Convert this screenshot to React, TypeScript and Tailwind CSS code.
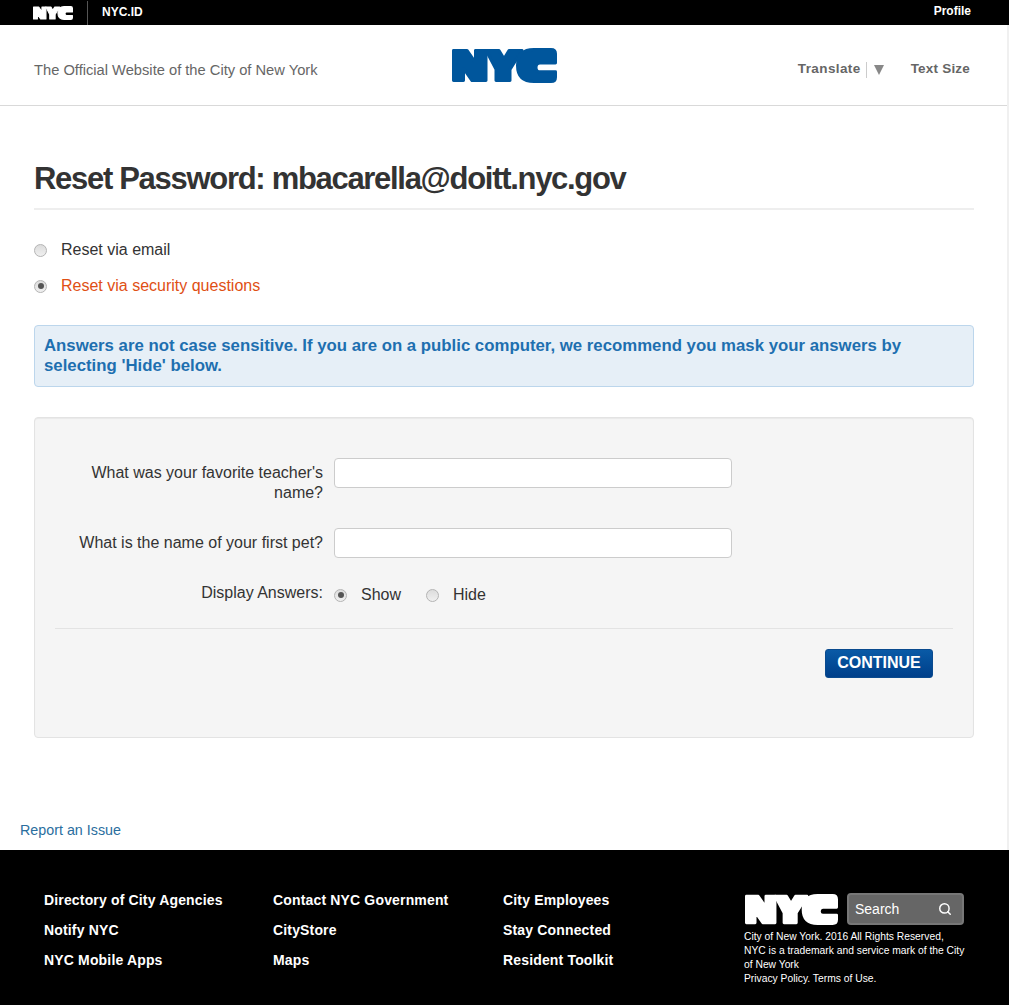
import { Search } from 'lucide-react';

const NycLogo = ({ className }: { className: string }) => (
  <svg className={className} viewBox="0 0 105 36" preserveAspectRatio="none" fill="currentColor" stroke="currentColor" strokeWidth={3} strokeLinejoin="round">
    <path d="M1.500 2.500H15L23.500 15V2.500H34V33.500H20L11.500 21V33.500H1.500Z" />
    <path d="M34 2.500H47L52 11L57 2.500H70L58 22V33.500H44V22Z" />
    <path d="M82 1.500H99Q103.500 1.500 103.500 6V15.500H88Q84 15.500 84 20Q84 24.500 88 24.500H103.500V30Q103.500 34.500 99 34.500H82Q65.500 34.500 65.500 18Q65.500 1.500 82 1.500Z" />
  </svg>
);

const Radio = ({ checked = false }: { checked?: boolean }) => (
  <span className="flex h-[13px] w-[13px] shrink-0 items-center justify-center rounded-full border border-[#b4b4b4] bg-gradient-to-b from-[#dcdcdc] to-[#f0f0f0]">
    {checked && <span className="h-[6px] w-[6px] rounded-full bg-[#555]" />}
  </span>
);

const footerCols = [
  { className: 'w-[229px]', links: ['Directory of City Agencies', 'Notify NYC', 'NYC Mobile Apps'] },
  { className: 'w-[230px]', links: ['Contact NYC Government', 'CityStore', 'Maps'] },
  { className: 'w-[242px]', links: ['City Employees', 'Stay Connected', 'Resident Toolkit'] },
];

export default function App() {
  return (
    <div className="min-h-[1005px] bg-white font-['Liberation_Sans',Arial,sans-serif] text-[#333]">
      {/* top bar */}
      <div className="flex h-[25px] items-center bg-black pl-[33px] pr-[38px] text-white">
        <NycLogo className="h-[14px] w-[40px] text-white" />
        <div className="ml-[14px] h-[24px] w-px bg-[#555]" />
        <span className="ml-[14px] pb-[1px] text-[12px] font-bold">NYC.ID</span>
        <span className="ml-auto pb-[4px] text-[12px] font-bold">Profile</span>
      </div>

      <div className="border-r-2 border-[#f0f0f0]">
        {/* header */}
        <div className="flex h-[81px] items-center border-b border-[#d9d9d9] pl-[34px] pr-[37px]">
          <span className="w-[418px] pt-[10px] text-[14.700px] text-[#666]">The Official Website of the City of New York</span>
          <NycLogo className="h-[35px] w-[105px] text-[#00569c]" />
          <div className="ml-auto flex items-center pt-[9px] text-[13.500px] font-bold text-[#666]">
            <span className="tracking-[0.4px]">Translate</span>
            <span className="ml-[5px] h-[16px] w-px bg-[#ccc]" />
            <span className="ml-[7px] h-0 w-0 border-x-[5px] border-t-[10px] border-x-transparent border-t-[#888]" />
            <span className="ml-[27px] tracking-[0.2px]">Text Size</span>
          </div>
        </div>

        {/* main */}
        <div className="pl-[34px] pr-[33px]">
          <h1 className="mt-[52px] border-b-2 border-[#eee] pb-[8px] text-[31px] font-bold leading-[42px] tracking-[-1.300px]">
            Reset Password: mbacarella@doitt.nyc.gov
          </h1>

          <div className="mt-[27px] flex h-[26px] items-center gap-[14px] text-[16px]">
            <Radio />
            <span>Reset via email</span>
          </div>
          <div className="mt-[10px] flex h-[26px] items-center gap-[14px] text-[16px] text-[#e04f14]">
            <Radio checked />
            <span>Reset via security questions</span>
          </div>

          <div className="mt-[26px] rounded border border-[#bcd6ec] bg-[#e6eff7] px-[9px] py-[10px] text-[16.800px] font-bold leading-[20px] text-[#1e6fb0]">
            Answers are not case sensitive. If you are on a public computer, we recommend you mask your answers by selecting 'Hide' below.
          </div>

          <div className="mt-[30px] h-[321px] rounded border border-[#e3e3e3] bg-[#f5f5f5] px-[20px] pt-[40px] text-[16px] shadow-[inset_0_1px_1px_rgba(0,0,0,0.05)]">
            <div className="flex gap-[11px]">
              <label className="w-[268px] pt-[5px] text-right leading-[20px]">What was your favorite teacher's name?</label>
              <input className="h-[30px] w-[398px] rounded border border-[#ccc] bg-white" />
            </div>
            <div className="mt-[25px] flex items-center gap-[11px]">
              <label className="w-[268px] text-right leading-[20px]">What is the name of your first pet?</label>
              <input className="h-[30px] w-[398px] rounded border border-[#ccc] bg-white" />
            </div>
            <div className="mt-[25px] flex items-start">
              <span className="w-[268px] text-right leading-[20px]">Display Answers:</span>
              <div className="ml-[11px] flex items-center">
                <Radio checked />
                <span className="ml-[14px] w-[65px]">Show</span>
                <Radio />
                <span className="ml-[14px]">Hide</span>
              </div>
            </div>
            <div className="mt-[21px] border-t border-[#e3e3e3]" />
            <div className="mt-[20px] flex justify-end pr-[20px]">
              <button className="h-[29px] w-[108px] rounded-[3px] border border-[#0a4a8e] bg-gradient-to-b from-[#0a5aa6] to-[#003f8a] pb-[2px] text-[16px] font-bold text-white">
                CONTINUE
              </button>
            </div>
          </div>
        </div>

        <a className="ml-[20px] mt-[82px] block h-[30px] text-[14.300px] leading-[20px] text-[#2a6e9e]">Report an Issue</a>
      </div>

      {/* footer */}
      <div className="flex h-[155px] bg-black pl-[44px] pt-[40px] text-white">
        {footerCols.map((col) => (
          <div key={col.links[0]} className={col.className}>
            {col.links.map((link) => (
              <div key={link} className="h-[30px] text-[14px] font-bold leading-[20px] tracking-[0.16px]">{link}</div>
            ))}
          </div>
        ))}
        <div className="mt-[3px] w-[222px]">
          <div className="flex items-center">
            <NycLogo className="h-[31px] w-[93px] text-white" />
            <div className="ml-[9px] flex h-[32px] w-[117px] items-center justify-between rounded border-2 border-[#777] bg-[#666] pl-[6px] pr-[10px] text-[14px] text-white">
              <span>Search</span>
              <Search size={14} strokeWidth={2.5} />
            </div>
          </div>
          <p className="-ml-px mt-[5px] text-[10.300px] leading-[14px]">
            City of New York. 2016 All Rights Reserved,
            <br />
            NYC is a trademark and service mark of the City of New York
            <br />
            Privacy Policy. Terms of Use.
          </p>
        </div>
      </div>
    </div>
  );
}
